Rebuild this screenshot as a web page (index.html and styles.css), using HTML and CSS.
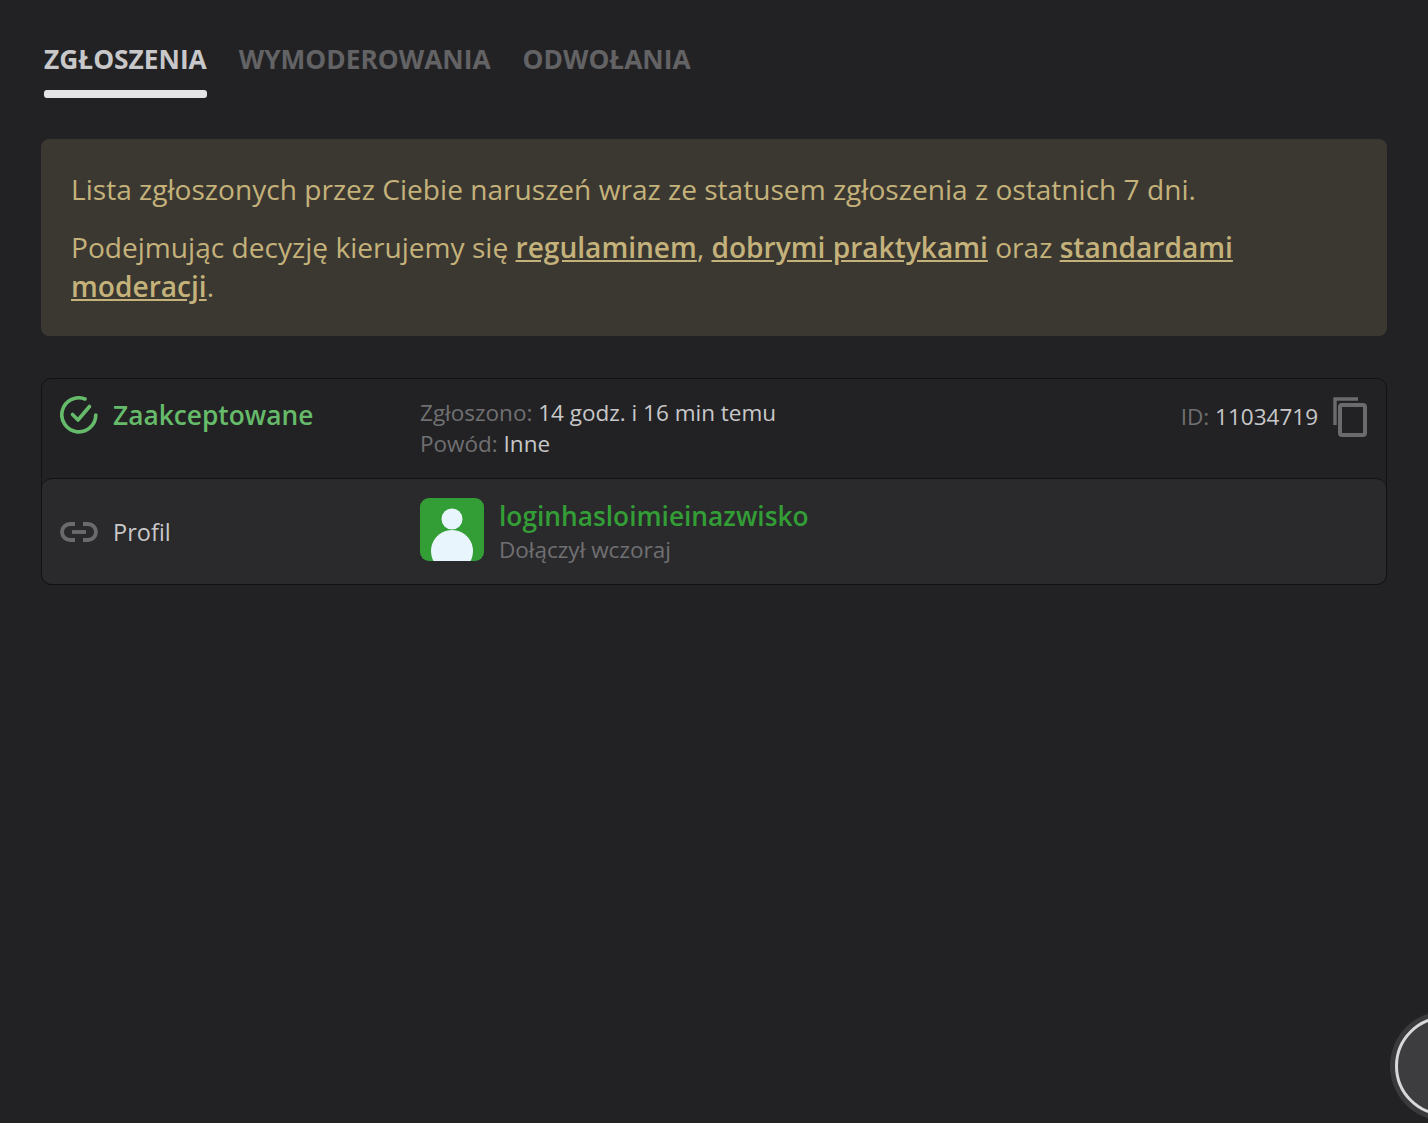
FILE: index.html
```html
<!DOCTYPE html>
<html lang="pl">
<head>
  <meta charset="UTF-8">
  <meta name="viewport" content="width=device-width, initial-scale=1.0">
  <title>Zgłoszenia</title>
  <link rel="stylesheet" href="styles.css">
</head>
<body>
  <div class="container">
    <nav class="tabs">
      <a class="tab active">ZGŁOSZENIA</a>
      <a class="tab">WYMODEROWANIA</a>
      <a class="tab">ODWOŁANIA</a>
    </nav>

    <div class="notice">
      <p>Lista zgłoszonych przez Ciebie naruszeń wraz ze statusem zgłoszenia z ostatnich 7 dni.</p>
      <p>Podejmując decyzję kierujemy się <a>regulaminem</a>, <a>dobrymi praktykami</a> oraz <a>standardami</a> <a>moderacji</a>.</p>
    </div>

    <div class="report">
      <div class="report-head">
        <div class="label status">
          <svg class="icon" viewBox="0 0 38 38" fill="none" stroke="#66bb6a" stroke-width="3.6" stroke-linecap="round" stroke-linejoin="round">
            <path d="M35.8 19A17 17 0 1 1 25 3"/>
            <path d="M12.5 18.5L18 24L29.5 10.5"/>
          </svg>
          <span>Zaakceptowane</span>
        </div>
        <div class="meta">
          <div><span class="muted">Zgłoszono:</span> 14 godz. i 16 min temu</div>
          <div><span class="muted">Powód:</span> Inne</div>
        </div>
        <div class="report-id">
          <span><span class="muted">ID:</span> 11034719</span>
          <svg class="copy" viewBox="0 0 34 40" fill="none" stroke="#6b6b6d" stroke-width="4">
            <path d="M2 28V2H25" stroke-width="3.4"/>
            <rect x="7" y="8" width="25" height="30" rx="2"/>
          </svg>
        </div>
      </div>
      <div class="report-body">
        <div class="label">
          <svg class="icon link-icon" viewBox="0 0 38 20" fill="none" stroke="#6b6b6d" stroke-width="3.8">
            <path d="M15 2H10A8 8 0 0 0 10 18H15"/>
            <path d="M23 2H28A8 8 0 0 1 28 18H23"/>
            <path d="M12 10H26"/>
          </svg>
          <span class="label-text">Profil</span>
        </div>
        <div class="profile">
          <svg class="avatar" viewBox="0 0 64 63">
            <rect width="64" height="63" rx="9" fill="#339e36"/>
            <circle cx="32" cy="21" r="10.5" fill="#e8f5fc"/>
            <path d="M13.5 63A21 21 0 1 1 50.5 63Z" fill="#e8f5fc"/>
          </svg>
          <div>
            <div class="username">loginhasloimieinazwisko</div>
            <div class="joined">Dołączył wczoraj</div>
          </div>
        </div>
      </div>
    </div>
  </div>

  <div class="fab"></div>
</body>
</html>
```

FILE: styles.css
```css
html, body {
  height: 100%;
}
body {
  font-family: "Open Sans", sans-serif;
  background: #222224;
  color: #c8c8ca;
  margin: 0;
  overflow: hidden;
}
.container {
  padding: 41px 41px 0;
}
.tabs {
  display: flex;
  gap: 32px;
  padding-left: 3px;
  margin-bottom: 41px;
}
.tab {
  font-size: 26.3px;
  font-weight: 700;
  line-height: 36px;
  color: #636365;
  padding-bottom: 13px;
  border-bottom: 8px solid transparent;
}
.tab.active {
  color: #c8c8ca;
  position: relative;
}
.tab.active::after {
  content: "";
  position: absolute;
  left: 0;
  right: 0;
  bottom: -8px;
  height: 8px;
  border-radius: 3px;
  background: #e4e4e6;
}
.notice {
  background: #3b3832;
  color: #c4b27a;
  border-radius: 8px;
  padding: 31px 30px 30px;
  font-size: 28.1px;
  line-height: 39px;
  margin-bottom: 42px;
}
.notice p {
  margin: 0 0 19px;
}
.notice p:last-child {
  margin-bottom: 0;
}
.notice a {
  font-weight: 600;
  text-decoration: underline;
}
.report {
  border: 1px solid #111113;
  border-radius: 10px;
  background: #222224;
}
.report-head, .report-body {
  display: flex;
  padding-left: 18px;
  padding-right: 18px;
  box-sizing: border-box;
}
.report-head {
  height: 99px;
  padding-top: 18px;
  padding-right: 19px;
}
.report-body {
  height: 106px;
  padding-top: 19px;
  background: #2a2a2c;
  border-top: 1px solid #111113;
  border-radius: 10px;
}
.label {
  display: flex;
  align-items: center;
  align-self: flex-start;
  gap: 15px;
  width: 360px;
  font-size: 23.5px;
  font-weight: 500;
  line-height: 33px;
  flex: none;
}
.report-body .label {
  margin-top: 16px;
}
.label-text {
  padding-top: 2px;
}
.status {
  color: #66bb6a;
  font-size: 26.3px;
  font-weight: 600;
  margin-top: -1px;
}
.icon {
  width: 38px;
  height: 38px;
  flex: none;
}
.link-icon {
  height: 20px;
}
.meta {
  flex: 1;
  font-size: 22.5px;
  line-height: 31px;
}
.muted {
  color: #707072;
}
.report-id {
  display: flex;
  align-items: flex-start;
  gap: 15px;
  font-size: 22.5px;
  line-height: 40px;
}
.copy {
  width: 34px;
  height: 40px;
}
.profile {
  display: flex;
  align-items: flex-start;
  gap: 15px;
}
.avatar {
  width: 64px;
  height: 63px;
  flex: none;
}
.username {
  font-size: 26.3px;
  font-weight: 600;
  line-height: 36px;
  color: #339e36;
}
.joined {
  font-size: 22.5px;
  line-height: 32px;
  color: #707072;
}
.fab {
  position: fixed;
  left: 1395px;
  top: 1016px;
  width: 100px;
  height: 100px;
  box-sizing: border-box;
  border-radius: 50%;
  background: #3d3d3f;
  border: 3px solid #d8d8da;
  box-shadow: 0 0 0 5px #3a3a3c;
}
```
